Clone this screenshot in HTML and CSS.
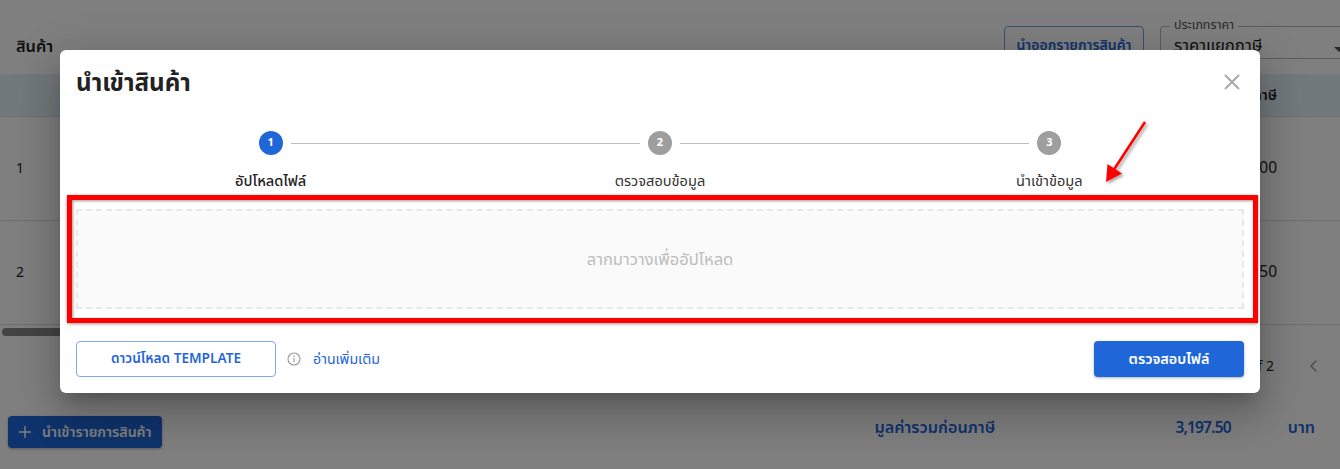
FILE: index.html
```html
<!DOCTYPE html>
<html lang="th">
<head>
<meta charset="utf-8">
<title>นำเข้าสินค้า</title>
<link rel="stylesheet" href="styles.css">
</head>
<body>
<main class="page">
  <header class="page-head">
    <h2 class="page-title">สินค้า</h2>
    <div class="page-actions">
      <button class="btn-export">นำออกรายการสินค้า</button>
      <fieldset class="price-select">
        <legend>ประเภทราคา</legend>
        <span>ราคาแยกภาษี</span>
        <i class="caret"></i>
      </fieldset>
    </div>
  </header>
  <div class="table">
    <div class="table-row table-header"><span></span><span class="cell-end">ภาษี</span></div>
    <div class="table-row table-body"><span>1</span><span class="cell-end">00</span></div>
    <div class="table-row table-body"><span>2</span><span class="cell-end">50</span></div>
  </div>
  <div class="scrollbar"></div>
  <div class="pagination">
    <span>1 of 2</span>
    <svg class="chev" viewBox="0 0 24 24" width="24" height="24"><path d="M15 5l-7 7 7 7" fill="none" stroke="currentColor" stroke-width="2"/></svg>
  </div>
  <footer class="page-foot">
    <button class="btn-import"><svg class="plus" viewBox="0 0 12 12" width="12" height="12"><path d="M6 0v12M0 6h12" fill="none" stroke="currentColor" stroke-width="1.4"/></svg><span>นำเข้ารายการสินค้า</span></button>
    <div class="totals">
      <span class="tot-label">มูลค่ารวมก่อนภาษี</span>
      <span class="tot-value">3,197.50</span>
      <span class="tot-unit">บาท</span>
    </div>
  </footer>
</main>

<div class="backdrop"></div>

<section class="dialog">
  <div class="dialog-head">
    <h1 class="dialog-title">นำเข้าสินค้า</h1>
    <svg class="close" viewBox="0 0 16 16" width="16" height="16"><path d="M1 1l14 14M15 1L1 15" fill="none" stroke="currentColor" stroke-width="2"/></svg>
  </div>
  <ol class="stepper">
    <li class="step active"><span class="dot">1</span><span class="step-label">อัปโหลดไฟล์</span></li>
    <li class="step"><span class="dot">2</span><span class="step-label">ตรวจสอบข้อมูล</span></li>
    <li class="step"><span class="dot">3</span><span class="step-label">นำเข้าข้อมูล</span></li>
  </ol>
  <div class="dropzone">ลากมาวางเพื่ออัปโหลด</div>
  <div class="dialog-foot">
    <button class="btn-outline">ดาวน์โหลด TEMPLATE</button>
    <svg class="info" viewBox="0 0 14 14" width="14" height="14"><circle cx="7" cy="7" r="6" fill="none" stroke="currentColor" stroke-width="1.1"/><path d="M7 6.2v4M7 3.6v1.3" fill="none" stroke="currentColor" stroke-width="1.2"/></svg>
    <a class="more" href="#">อ่านเพิ่มเติม</a>
    <button class="btn-primary">ตรวจสอบไฟล์</button>
  </div>
  <div class="mark-box"></div>
  <svg class="mark-arrow" viewBox="0 0 50 70" width="50" height="70">
    <defs><filter id="sh" x="-30%" y="-30%" width="170%" height="170%"><feDropShadow dx="2" dy="2" stdDeviation="1.5" flood-color="#000" flood-opacity=".35"/></filter></defs>
    <g filter="url(#sh)"><path d="M44 2L12 51" fill="none" stroke="#f00" stroke-width="2.6"/><path d="M5 62L6.5 44L21 53.5Z" fill="#f00"/></g>
  </svg>
</section>
</body>
</html>
```
FILE: styles.css
```css
* { box-sizing: border-box; }
html, body { margin: 0; height: 100%; }
body {
  width: 1340px;
  height: 469px;
  overflow: hidden;
  position: relative;
  background: #fff;
  font-family: "Noto Sans Thai", "Noto Sans", "Liberation Sans", sans-serif;
  color: #222;
}
button { font-family: inherit; cursor: pointer; }

.page { height: 469px; display: flex; flex-direction: column; }
.page-head {
  height: 74px;
  padding: 26px 0 0 16px;
  display: flex;
  justify-content: space-between;
}
.page-title { margin: 9px 0 0; font-size: 16.3px; line-height: 24px; font-weight: 600; }
.page-actions { display: flex; gap: 16px; align-items: flex-start; }
.btn-export {
  width: 140px; height: 40px; padding: 0 0 2px; background: none;
  border: 1px solid #6f9ee6; border-radius: 4px;
  color: #1f66d9; font-size: 14px; font-weight: 600;
}
.price-select {
  position: relative; width: 180px; height: 40px; margin: -7px 0 0; padding: 1px 13px 0;
  border: 1px solid #bbb; border-radius: 4px 0 0 4px; border-right: 0;
  font-size: 16.7px; line-height: 24px;
}
.price-select legend { padding: 0 4px; font-size: 12.4px; line-height: 14px; color: #555; margin-left: -4px; }
.caret { position: absolute; right: -4px; top: 14px; border: 5px solid transparent; border-top-color: #555; }

.table-row { display: flex; justify-content: space-between; align-items: center; padding: 0 63px 0 16px; font-size: 14px; }
.table-header { height: 43px; background: #e5f2f9; border-bottom: 1px solid #ddd; font-weight: 600; }
.table-body { height: 104px; border-bottom: 1px solid #ddd; }
.table-body .cell-end { font-size: 15.5px; }
.scrollbar { width: 400px; height: 8px; margin: 3px 0 0 2px; border-radius: 4px; background: #888; }
.pagination {
  height: 60px; padding: 0 17px 0 0;
  display: flex; justify-content: flex-end; align-items: center; gap: 31px;
  font-size: 14px;
}
.chev { color: #999; width: 18px; height: 18px; }
.page-foot { display: flex; justify-content: space-between; align-items: center; padding: 20px 25px 0 8px; }
.btn-import {
  display: flex; align-items: center; gap: 11px; height: 32px; width: 154px; padding: 0 0 0 11px;
  background: #1f66d9; color: #fff; border: 0; border-radius: 4px;
  font-size: 14.2px; font-weight: 600; white-space: nowrap;
  box-shadow: 0 1px 3px rgba(0,0,0,.3);
}
.plus { flex: none; }
.totals { display: flex; align-items: center; margin-bottom: 8px; color: #1f66d9; font-size: 16.2px; font-weight: 600; }
.tot-value { margin-left: 180px; font-size: 15.5px; letter-spacing: -.8px; }
.tot-unit { margin-left: 57px; }

.backdrop { position: absolute; inset: 0; background: rgba(0,0,0,.5); }

.dialog {
  position: absolute; left: 60px; top: 50px; width: 1200px; height: 343px;
  background: #fff; border-radius: 6px;
  padding: 0 16px;
  box-shadow: 0 11px 15px -7px rgba(0,0,0,.2), 0 24px 38px 3px rgba(0,0,0,.14), 0 9px 46px 8px rgba(0,0,0,.12);
}
.dialog-head { display: flex; justify-content: space-between; align-items: center; height: 66px; padding-right: 4px; }
.dialog-title { margin: 2px 0 0; font-size: 24.2px; line-height: 32px; font-weight: 700; color: #222; }
.close { color: #a8a8a8; margin-top: -2px; }

.stepper { list-style: none; margin: 15px 0 0; padding: 0; display: grid; grid-template-columns: repeat(3, 1fr); }
.step { position: relative; display: flex; flex-direction: column; align-items: center; }
.step + .step::before {
  content: ""; position: absolute; top: 12px; left: calc(-50% + 20px); right: calc(50% + 20px);
  border-top: 1px solid #bdbdbd;
}
.dot {
  width: 24px; height: 24px; border-radius: 50%;
  background: #9e9e9e; color: #fff;
  font-size: 11px; font-weight: 700; line-height: 24px; text-align: center;
}
.step.active .dot { background: #1f66d9; }
.step-label { margin-top: 17px; font-size: 14.6px; line-height: 20px; color: #333; }
.step.active .step-label { font-weight: 500; color: #222; }

.dropzone {
  margin-top: 17px; height: 100px;
  display: flex; align-items: center; justify-content: center;
  background: #fafafa; border: 2px dashed #e8e8e8;
  color: #bdbdbd; font-size: 16.6px;
}
.dialog-foot { display: flex; align-items: center; margin-top: 32px; }
.btn-outline {
  width: 200px; height: 36px; background: #fff;
  border: 1px solid #7fabed; border-radius: 4px;
  color: #1f66d9; font-size: 13.6px; font-weight: 600;
}
.info { color: #999; margin-left: 11px; }
.more { margin-left: 12px; color: #1f66d9; font-size: 14.2px; text-decoration: none; }
.btn-primary {
  margin-left: auto; width: 150px; height: 36px;
  background: #1f66d9; color: #fff; border: 0; border-radius: 4px;
  font-size: 14.4px; font-weight: 600;
  box-shadow: 0 1px 3px rgba(0,0,0,.3);
}

.mark-box {
  position: absolute; left: 7px; top: 145px; width: 1191px; height: 128px;
  border: 5px solid #f00;
  box-shadow: 0 1px 3px rgba(0,0,0,.4), inset 1px 1px 3px rgba(0,0,0,.4);
  pointer-events: none;
}
.mark-arrow { position: absolute; left: 1041px; top: 70px; overflow: visible; }
```
